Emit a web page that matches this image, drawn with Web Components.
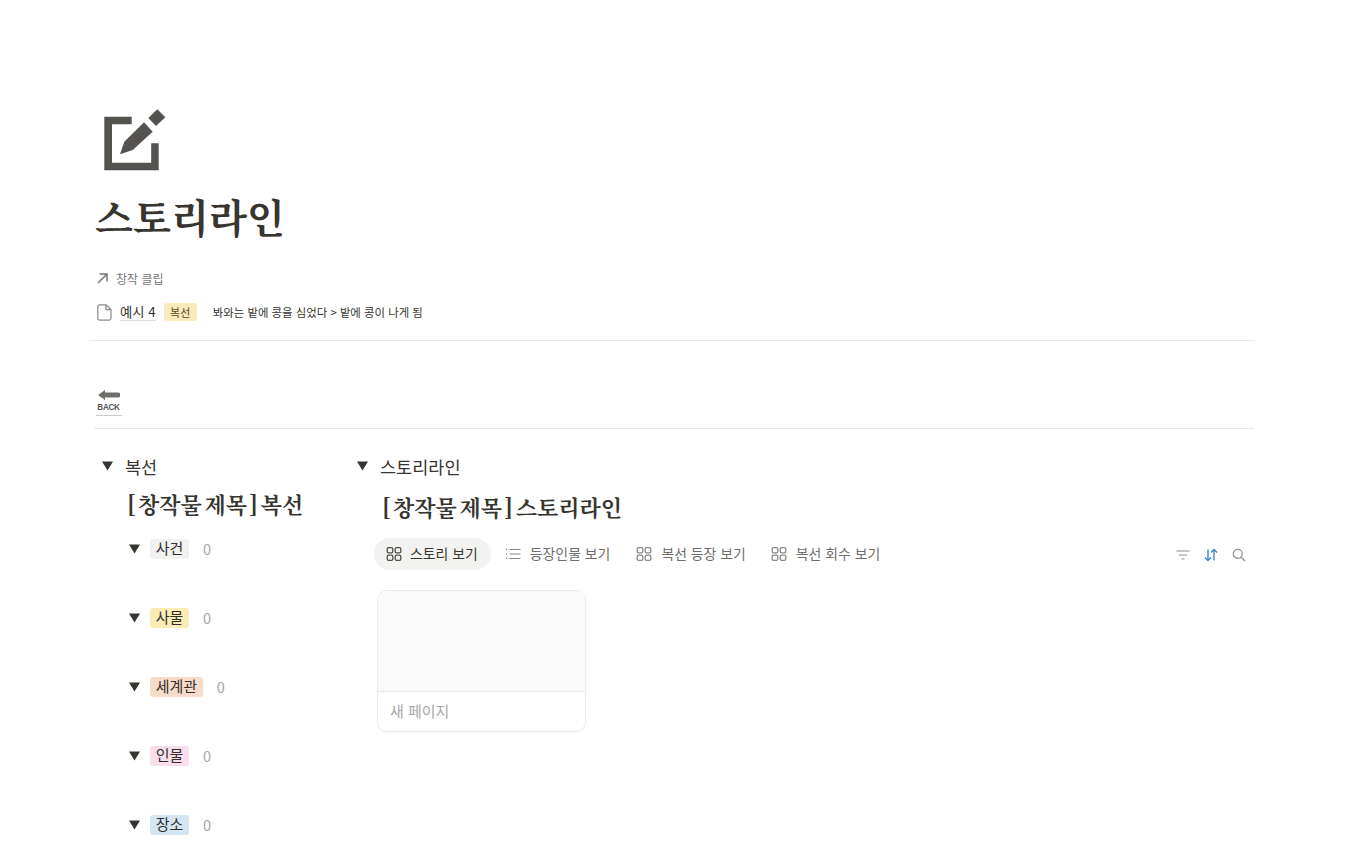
<!DOCTYPE html>
<html lang="ko"><head><meta charset="utf-8">
<style>
html,body{margin:0;padding:0;background:#fff;}
body{font-family:"Noto Sans CJK KR","Noto Sans",sans-serif;color:#37352f;height:844px;overflow:hidden;}
</style></head><body>
<story-page></story-page>
<script>
const SERIF='"Noto Serif CJK KR","Noto Sans CJK KR",serif';
function def(name,css,html){
  customElements.define(name,class extends HTMLElement{
    constructor(){super();const s=this.attachShadow({mode:'open'});
      s.innerHTML='<style>'+css+'</style>'+(typeof html==='function'?html(this):html);}
  });
}
const GRID='<svg width="16" height="16" viewBox="0 0 16 16" fill="none" stroke="currentColor" stroke-width="1.3"><rect x="1.2" y="1.7" width="5.6" height="5.1" rx="1.4"/><rect x="9.2" y="1.7" width="5.6" height="5.1" rx="1.4"/><rect x="1.2" y="9.2" width="5.6" height="5.1" rx="1.4"/><rect x="9.2" y="9.2" width="5.6" height="5.1" rx="1.4"/></svg>';
const LIST='<svg width="16" height="16" viewBox="0 0 16 16" fill="none" stroke="currentColor" stroke-width="1.2"><path d="M4.5 3.5H15.5M4.5 8H15.5M4.5 12.5H15.5"/><path d="M1 3.5H2M1 8H2M1 12.5H2" stroke-width="1.6"/></svg>';
def('tri-mark',':host{display:block;width:11px;height:10px;line-height:0}','<svg width="11" height="10" viewBox="0 0 11 10"><path d="M0 .5H11L5.5 9.5Z" fill="#37352f"/></svg>');
def('hue-tag',':host{display:inline-flex;align-items:center;justify-content:center;box-sizing:border-box;height:20px;padding:0 5.7px 2px;border-radius:3px;font-size:15px;color:#32302c;background:var(--bg);line-height:18px;white-space:nowrap}','<slot></slot>');
def('rule-line',':host{display:block;height:1px;background:#e9e9e7}','');
def('page-head',`:host{display:block}
 .ic{display:block;margin:100px 0 0 4px;}
 h1{font:700 39.3px/48px ${SERIF};color:#37352f;margin:20px 0 0 1px;}
 .rel{display:flex;align-items:center;height:20px;margin:28px 0 0 3px;font-size:12px;color:#787774;gap:8px}
 .row{display:flex;align-items:center;height:24px;margin:12px 0 0 3px;}
 .name{font-size:13.3px;color:#37352f;margin-left:8px;border-bottom:1px solid #dcdcda;line-height:16px;height:16px}
 .chip{display:inline-flex;align-items:center;height:18px;padding:0 6.5px;border-radius:3px;background:#faebbd;color:#5a4a1c;font-size:11px;margin-left:8px}
 .txt{font-size:11.4px;color:#37352f;margin-left:16px}`,
 `<svg class="ic" width="70" height="72" viewBox="98 100 70 72" fill="#545350"><path d="M104.3 116.7H131.7V124.2H112V162.8H151.2V143.3H158.7V170.3H104.3Z"/><path d="M120 154.3L124.3 141.7L144 122.3L152.7 131.7L132.7 150Z"/><path d="M157.3 109.3L165.3 117.3L156 126L148.3 118Z"/></svg>
 <h1>스토리라인</h1>
 <div class="rel"><svg width="11" height="11" viewBox="0 0 11 11" fill="none" stroke="#787774" stroke-width="1.5"><path d="M1 10L9.5 1.5M2.5 1H10V8.5"/></svg><span>창작 클립</span></div>
 <div class="row"><svg width="15" height="17" viewBox="0 0 15 17" fill="none" stroke="#8a8985" stroke-width="1.2"><path d="M2.6 .8H9L14 5.6V14.2A2 2 0 0 1 12 16.2H2.8A2 2 0 0 1 .8 14.2V2.6A1.8 1.8 0 0 1 2.6 .8ZM9 .8V5.6H14"/></svg><span class="name">예시 4</span><span class="chip">복선</span><span class="txt">봐와는 밭에 콩을 심었다 &gt; 밭에 콩이 나게 됨</span></div>`);
def('back-link',`:host{display:block;width:26px;margin:49px 0 0 2px;border-bottom:1px solid #ccc;padding-bottom:2px}
 svg{display:block;margin-left:2px}
 span{display:block;font:700 8.2px/10px "Liberation Sans",sans-serif;color:#555;text-align:center;margin:3px 0 0 -1px;letter-spacing:-.3px}`,
 '<svg width="22" height="10" viewBox="0 0 22 10" fill="#6f6e6b"><path d="M0 5L7 0V2.5H20A2.5 2.5 0 0 1 20 7.5H7V10Z"/></svg><span>BACK</span>');
def('tag-row',`:host{display:flex;align-items:center;height:20px;margin:0 0 49px 35px;font-size:14px}
 tri-mark{margin-right:10px}
 .n{margin-left:14px;padding-bottom:2px;color:#a8a7a4;font-size:14.5px}`,
 t=>`<tri-mark></tri-mark><hue-tag style="--bg:${t.getAttribute('bg')}">${t.getAttribute('label')}</hue-tag><span class="n">0</span>`);
def('toggle-head',`:host{display:flex;align-items:center;height:26px;font-size:17.5px;color:#37352f}
 tri-mark{margin-right:12px}`,'<tri-mark></tri-mark><slot></slot>');
def('sub-title',`:host{display:block;font:700 22px/30px ${SERIF};color:#37352f;white-space:nowrap;word-spacing:-4.2px}`,'<slot></slot>');
def('left-col',`:host{display:block;width:255px;flex:none}
 toggle-head{margin-left:8px}
 sub-title{margin:10px 0 20px 33px}`,
 `<toggle-head>복선</toggle-head><sub-title>[ 창작물 제목 ] 복선</sub-title>
 <tag-row bg="#f1f1ef" label="사건"></tag-row><tag-row bg="#fbecb6" label="사물"></tag-row><tag-row bg="#f8dcc9" label="세계관"></tag-row><tag-row bg="#f9dfec" label="인물"></tag-row><tag-row bg="#d3e6f2" label="장소"></tag-row>`);
def('view-tabs',`:host{display:flex;align-items:center;height:32px;margin:16px 0 0 25px;font-size:13.9px;color:#6f6e6b}
 .t{display:flex;align-items:center;height:32px;gap:9px;padding:0 12px;border-radius:16px;margin-right:1px;white-space:nowrap}
 .t span{padding-bottom:2px}
 .t svg{color:#8a8985}
 .a{background:#f2f2f1;color:#37352f;padding:0 13px 0 12px;gap:8px}.a svg{color:#4f4e4b}
 .sp{flex:1}
 .tools{display:flex;align-items:center;gap:14px;margin-right:9px;padding-top:2px}`,
 `<div class="t a">${GRID}<span>스토리 보기</span></div><div class="t" style="padding-left:13px">${LIST}<span>등장인물 보기</span></div><div class="t" style="padding-left:13px">${GRID}<span>복선 등장 보기</span></div><div class="t">${GRID}<span>복선 회수 보기</span></div>
 <div class="sp"></div><div class="tools">
 <svg width="14" height="14" viewBox="0 0 14 14" fill="none" stroke="#8f8e8b" stroke-width="1.2"><path d="M.5 3H13.5M3 7H11M5.5 11H8.5"/></svg>
 <svg width="14" height="14" viewBox="0 0 14 14" fill="none" stroke="#3f86c9" stroke-width="1.4"><path d="M4 1.5V12.5M1 9.5L4 12.5L7 9.5M10 12.5V1.5M7 4.5L10 1.5L13 4.5"/></svg>
 <svg width="14" height="14" viewBox="0 0 14 14" fill="none" stroke="#8f8e8b" stroke-width="1.2"><circle cx="5.8" cy="5.8" r="4.5"/><path d="M9 9L13 13"/></svg></div>`);
def('gallery-card',`:host{display:block;width:207px;height:140px;margin:20px 0 0 28px;border:1px solid #ececea;border-radius:10px;overflow:hidden;box-sizing:content-box;box-shadow:0 1px 2px rgba(0,0,0,.03)}
 .img{height:100px;background:#fafafa;border-bottom:1px solid #e9e9e7}
 .t{padding:9px 12px;font-size:15px;line-height:20px;color:#a8a7a4}`,
 '<div class="img"></div><div class="t">새 페이지</div>');
def('right-col',`:host{display:block;flex:1;min-width:0}
 toggle-head{margin-left:8px}
 sub-title{margin:13px 0 0 33px}`,
 `<toggle-head>스토리라인</toggle-head><sub-title>[ 창작물 제목 ] 스토리라인</sub-title><view-tabs></view-tabs><gallery-card></gallery-card>`);
def('story-page',`:host{display:block;width:1350px;box-sizing:border-box;padding:0 95px 0 89px}
 .in{padding-left:5px}
 .r1{margin-top:16px}
 .r2{margin:12px 1px 0 5px}
 .cols{display:flex;margin:24px 0 0 5px}`,
 `<div class="in"><page-head></page-head></div><rule-line class="r1"></rule-line>
 <div class="in"><back-link></back-link></div><rule-line class="r2"></rule-line>
 <div class="cols"><left-col></left-col><right-col></right-col></div>`);
</script>
</body></html>
